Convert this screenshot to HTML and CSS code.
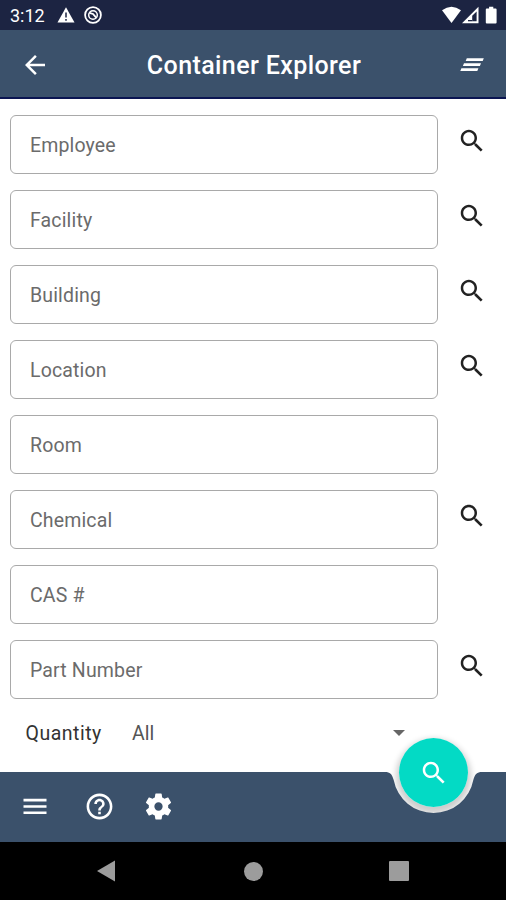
FILE: index.html
```html
<!DOCTYPE html>
<html lang="en">
<head>
<meta charset="utf-8">
<title>Container Explorer</title>
<link rel="stylesheet" href="styles.css">
</head>
<body>
<svg class="defs" width="0" height="0">
  <symbol id="search" viewBox="0 0 24 24"><path d="M15.5 14h-.79l-.28-.27C15.41 12.59 16 11.11 16 9.5 16 5.91 13.09 3 9.5 3S3 5.91 3 9.5 5.91 16 9.5 16c1.61 0 3.09-.59 4.23-1.57l.27.28v.79l5 4.99L20.49 19l-4.99-5zm-6 0C7.01 14 5 11.99 5 9.5S7.01 5 9.5 5 14 7.01 14 9.5 11.99 14 9.5 14z"/></symbol>
</svg>
<div class="screen">
  <header class="status">
    <span class="clock">3:12</span>
    <svg class="warn" width="18" height="16" viewBox="0 0 18 16"><path d="M9 .3 17.5 15.5H.5z" fill="#fff"/><path d="M9 5.5v5M9 12v1.8" stroke="#1c2442" stroke-width="1.5"/></svg>
    <svg class="sync" width="18" height="18" viewBox="0 0 18 18" fill="none" stroke="#fff"><circle cx="9" cy="9" r="7.9" stroke-width="1.8"/><circle cx="9" cy="9" r="4.3" stroke-width="1.5"/><path d="M5.4 6.8 9 8 12.2 11.6" stroke-width="1.8"/></svg>
    <span class="grow"></span>
    <svg width="56" height="18" viewBox="0 0 56 18"><path d="M0 4.3Q9.5-2.8 19 4.3L9.5 17z" fill="#fff"/><path d="M20 17.3 36.5.8v16.5z" fill="#fff"/><path d="M30.2 9.8 34.6 5.4v9.9h-4.4z" fill="#1c2442"/><path d="M26 14h4.2v1.3H26z" fill="#1c2442"/><path d="M44.8 2.5h2.3V.7h4.2v1.8h2.3q1 0 1 1v12.9q0 1-1 1h-8.8q-1 0-1-1V3.5q0-1 1-1z" fill="#fff"/></svg>
  </header>
  <div class="appbar">
    <svg width="30" height="30" viewBox="0 0 24 24" fill="#fff"><path d="M20 11H7.83l5.59-5.59L12 4l-8 8 8 8 1.41-1.41L7.83 13H20v-2z"/></svg>
    <h1>Container Explorer</h1>
    <svg width="24" height="16" viewBox="0 0 24 16" fill="#fff"><path d="M6.8 1.2h17L22.7 4H5.7zM4 6.3h17L19.9 9H2.9zM1.4 11.3h17L17.3 14H.3z"/></svg>
  </div>
  <main class="form">
    <div class="row"><div class="field">Employee</div><svg class="find"><use href="#search"/></svg></div>
    <div class="row"><div class="field">Facility</div><svg class="find"><use href="#search"/></svg></div>
    <div class="row"><div class="field">Building</div><svg class="find"><use href="#search"/></svg></div>
    <div class="row"><div class="field">Location</div><svg class="find"><use href="#search"/></svg></div>
    <div class="row"><div class="field">Room</div></div>
    <div class="row"><div class="field">Chemical</div><svg class="find"><use href="#search"/></svg></div>
    <div class="row"><div class="field">CAS #</div></div>
    <div class="row"><div class="field">Part Number</div><svg class="find"><use href="#search"/></svg></div>
    <div class="quantity"><span class="qlabel">Quantity</span><span class="qvalue">All</span><span class="caret"></span></div>
  </main>
  <footer class="bottombar">
    <svg class="barshape" width="506" height="70" viewBox="0 0 506 70">
      <path d="M0 0H385C390 0 392 2 393.7 8A40.5 40.5 0 0 0 473.3 8C475 2 477 0 482 0H506V70H0z" fill="#3b516b"/>
    </svg>
    <svg class="menu" width="24" height="17" viewBox="0 0 24 17"><path d="M.5.8h23v2.6H.5zM.5 7.2h23v2.6H.5zM.5 13.4h23V16H.5z" fill="#fff"/></svg>
    <svg class="help" width="31" height="31" viewBox="0 0 24 24" fill="#fff"><path d="M11 18h2v-2h-2v2zm1-16C6.48 2 2 6.48 2 12s4.48 10 10 10 10-4.48 10-10S17.52 2 12 2zm0 18c-4.41 0-8-3.59-8-8s3.59-8 8-8 8 3.59 8 8-3.59 8-8 8zm0-14c-2.21 0-4 1.79-4 4h2c0-1.1.9-2 2-2s2 .9 2 2c0 2-3 1.75-3 5h2c0-2.25 3-2.5 3-5 0-2.21-1.79-4-4-4z"/></svg>
    <svg class="gear" width="31" height="31" viewBox="0 0 24 24" fill="#fff"><path d="M19.43 12.98c.04-.32.07-.64.07-.98s-.03-.66-.07-.98l2.11-1.65c.19-.15.24-.42.12-.64l-2-3.46c-.12-.22-.39-.3-.61-.22l-2.49 1c-.52-.4-1.08-.73-1.69-.98l-.38-2.65C14.46 2.18 14.25 2 14 2h-4c-.25 0-.46.18-.49.42l-.38 2.65c-.61.25-1.17.59-1.69.98l-2.49-1c-.23-.09-.49 0-.61.22l-2 3.46c-.13.22-.07.49.12.64l2.11 1.65c-.04.32-.07.65-.07.98s.03.66.07.98l-2.11 1.65c-.19.15-.24.42-.12.64l2 3.46c.12.22.39.3.61.22l2.49-1c.52.4 1.08.73 1.69.98l.38 2.65c.03.24.24.42.49.42h4c.25 0 .46-.18.49-.42l.38-2.65c.61-.25 1.17-.59 1.69-.98l2.49 1c.23.09.49 0 .61-.22l2-3.46c.12-.22.07-.49-.12-.64l-2.11-1.65zM12 15.2a3.2 3.2 0 1 1 0-6.4 3.2 3.2 0 0 1 0 6.4z"/></svg>
    <div class="fab"><svg width="30" height="30"><use href="#search"/></svg></div>
  </footer>
  <nav class="sysnav">
    <svg width="20" height="22" viewBox="0 0 20 22"><path d="M1 11 19 .5v21z" fill="#9c9c9c"/></svg>
    <span class="home"></span>
    <span class="recent"></span>
  </nav>
</div>
</body>
</html>
```

FILE: styles.css
```css
* { box-sizing: border-box; }
body { margin: 0; font-family: Roboto, "Liberation Sans", sans-serif; background: #fff; }
svg { display: block; flex: none; }
.defs { position: absolute; }
.screen { width: 506px; height: 900px; display: flex; flex-direction: column; overflow: hidden; }
.status { height: 30px; background: #1c2442; color: #fff; display: flex; align-items: center; padding: 0 8px 0 10px; }
.clock { font-size: 18px; line-height: 30px; width: 47px; padding-top: 2px; }
.sync { margin-left: 9px; }
.grow { flex: 1; }
.appbar { height: 69px; background: #3b516b; border-bottom: 2px solid #0b1552; display: flex; align-items: center; justify-content: space-between; padding: 2px 22px 0 20px; }
h1 { margin: 0 2px 0 0; padding-top: 2px; color: #fff; font-size: 25px; font-weight: 500; letter-spacing: 0.4px; line-height: 32px; }
.form { height: 673px; padding: 16px 0 0 10px; }
.row { display: flex; height: 59px; margin-bottom: 16px; }
.field { width: 428px; height: 59px; border: 1.5px solid #a9a9a9; border-radius: 6px; padding-left: 19px; line-height: 60px; font-size: 19.5px; letter-spacing: 0.15px; color: #6b6b6b; }
.find { width: 30px; height: 30px; margin: 11px 0 0 19px; fill: #222; }
.quantity { display: flex; align-items: center; height: 36px; padding-left: 15.5px; font-size: 19.5px; letter-spacing: 0.5px; color: #333; }
.qlabel { width: 106.5px; }
.qvalue { width: 261px; letter-spacing: 0; color: #555; }
.caret { border: 6px solid transparent; border-top-color: #666; border-bottom: 0; }
.bottombar { height: 70px; position: relative; display: flex; align-items: center; padding-left: 23px; }
.bottombar::before { content: ""; position: absolute; left: 399px; top: -34px; width: 69px; height: 69px; border-radius: 50%; box-shadow: 0 4px 6px 3px rgba(0,0,0,.2); }
.barshape { position: absolute; left: 0; top: 0; }
.menu, .help, .gear { position: relative; top: -0.5px; }
.help { margin-left: 36.5px; }
.gear { margin-left: 28.5px; }
.fab { position: absolute; left: 399px; top: -34px; width: 69px; height: 69px; border-radius: 50%; background: #03dac5; fill: #fff; display: flex; align-items: center; justify-content: center; }
.sysnav { height: 58px; background: #000; display: flex; align-items: center; justify-content: space-between; padding: 0 97px 0 96px; }
.home { width: 19px; height: 19px; margin-left: 2px; border-radius: 50%; background: #9c9c9c; }
.recent { width: 20px; height: 20px; border-radius: 1px; background: #9c9c9c; }
```
